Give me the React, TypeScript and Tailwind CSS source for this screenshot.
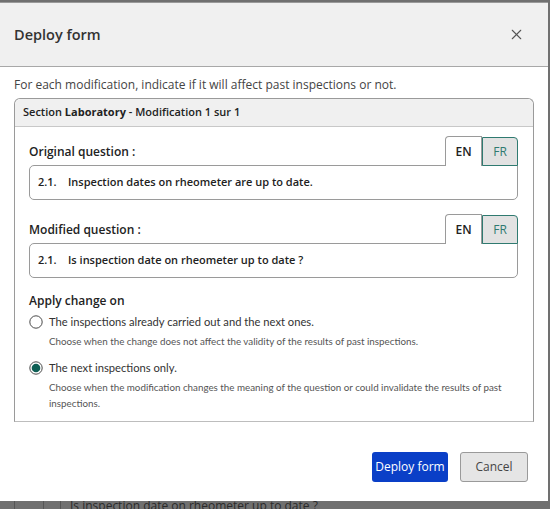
import { X } from "lucide-react";

const font = { fontFamily: '"Open Sans", "Noto Sans", sans-serif' };
const lightFont = { fontFamily: 'Lato, "Open Sans", sans-serif' };

function LangTabs() {
  return (
    <div className="relative z-10 -mb-px flex items-end">
      <div className="flex h-[30px] w-[37px] items-center justify-center rounded-tl-[4px] border border-b-0 border-[#9a9a9a] bg-white text-[12px] font-semibold text-[#222]">
        EN
      </div>
      <div className="flex h-[29px] w-[36px] items-center justify-center rounded-tr-[4px] border border-[#2f7a70] bg-[#e2e2e2] text-[12px] text-[#2f7a70]">
        FR
      </div>
    </div>
  );
}

function QuestionBlock({ label, text }: { label: string; text: string }) {
  return (
    <div>
      <div className="flex items-end justify-between">
        <span className="pb-[4px] text-[12px] font-semibold text-[#222]">{label}</span>
        <LangTabs />
      </div>
      <div className="flex h-[35px] items-center rounded-[5px] rounded-tr-none border border-[#9a9a9a] bg-white px-[8px] text-[11px] font-semibold text-[#222]">
        <span className="w-[30px]">2.1.</span>
        <span>{text}</span>
      </div>
    </div>
  );
}

function Radio({ checked }: { checked?: boolean }) {
  return (
    <svg width="14" height="14" viewBox="0 0 14 14" className="shrink-0">
      <circle cx="7" cy="7" r="6.2" fill="white" stroke="#4a4a4a" strokeWidth="1" />
      {checked ? <circle cx="7" cy="7" r="4.3" fill="#0e5f55" /> : null}
    </svg>
  );
}

function Option({ checked, title, hint }: { checked?: boolean; title: string; hint: string }) {
  return (
    <div className="flex flex-col" style={lightFont}>
      <div className="flex items-center gap-[6px]">
        <Radio checked={checked} />
        <span className="text-[11.2px] text-[#333]">{title}</span>
      </div>
      <p className="pl-[20px] pt-[2px] text-[9.8px] leading-[16px] text-[#555]">{hint}</p>
    </div>
  );
}

export default function App() {
  return (
    <div className="flex h-[509px] w-[550px] flex-col overflow-hidden bg-[#707070]" style={font}>
      <div className="h-[2px] shrink-0" />
      <div className="flex h-[499px] shrink-0">
        <div className="flex w-[548px] flex-col border-t border-[#9a9a9a] bg-white">
          <header className="flex h-[64px] shrink-0 items-center justify-between border-b border-[#a8a8a8] bg-[#f0f0f0] pl-[14px] pr-[23px]">
            <h1 className="text-[14.5px] font-semibold text-[#333]">Deploy form</h1>
            <X className="h-[17px] w-[17px] text-[#555]" strokeWidth={1.5} />
          </header>

          <div className="flex flex-col px-[14px]">
            <p className="pt-[9px] text-[12px] leading-[18px] text-[#444]">
              For each modification, indicate if it will affect past inspections or not.
            </p>

            <section className="mt-[4px] h-[324px] rounded-t-[6px] border border-[#9a9a9a] border-b-[#bdbdbd]">
              <div className="flex h-[28px] items-center rounded-t-[6px] border-b border-[#c8c8c8] bg-[#f0f0f0] px-[8px] text-[11px] font-semibold text-[#222]">
                <span>
                  Section <span className="font-bold">Laboratory</span> - Modification 1 sur 1
                </span>
              </div>
              <div className="flex flex-col gap-[14px] pl-[14px] pr-[15px] pt-[9px]">
                <QuestionBlock label="Original question :" text="Inspection dates on rheometer are up to date." />
                <QuestionBlock label="Modified question :" text="Is inspection date on rheometer up to date ?" />
              </div>
              <div className="flex flex-col px-[14px] pt-[14px]">
                <h2 className="text-[12px] font-semibold text-[#222]">Apply change on</h2>
                <div className="mt-[4px] flex flex-col gap-[11px]">
                  <Option
                    title="The inspections already carried out and the next ones."
                    hint="Choose when the change does not affect the validity of the results of past inspections."
                  />
                  <Option
                    checked
                    title="The next inspections only."
                    hint="Choose when the modification changes the meaning of the question or could invalidate the results of past inspections."
                  />
                </div>
              </div>
            </section>
          </div>

          <div className="mt-[30px] flex justify-end gap-[12px] pr-[20px]">
            <button
              type="button"
              className="h-[30px] w-[76px] rounded-[3px] bg-[#0a3fc7] text-[12px] text-white"
            >
              Deploy form
            </button>
            <button
              type="button"
              className="h-[30px] w-[68px] rounded-[3px] border border-[#9a9a9a] bg-[#e5e5e5] text-[12px] text-[#444]"
            >
              Cancel
            </button>
          </div>
        </div>
        <div className="flex-1" />
      </div>
      <div className="flex h-[8px] shrink-0 overflow-hidden">
        <div className="w-[15px] border-r border-[#555]" />
        <div className="w-[29px] border-r border-[#555]" />
        <div className="w-[17px] border-r border-[#555]" />
        <div className="pl-[9px] text-[12px] leading-[10px] text-[#2a2a2a]">
          Is inspection date on rheometer up to date ?
        </div>
      </div>
    </div>
  );
}
